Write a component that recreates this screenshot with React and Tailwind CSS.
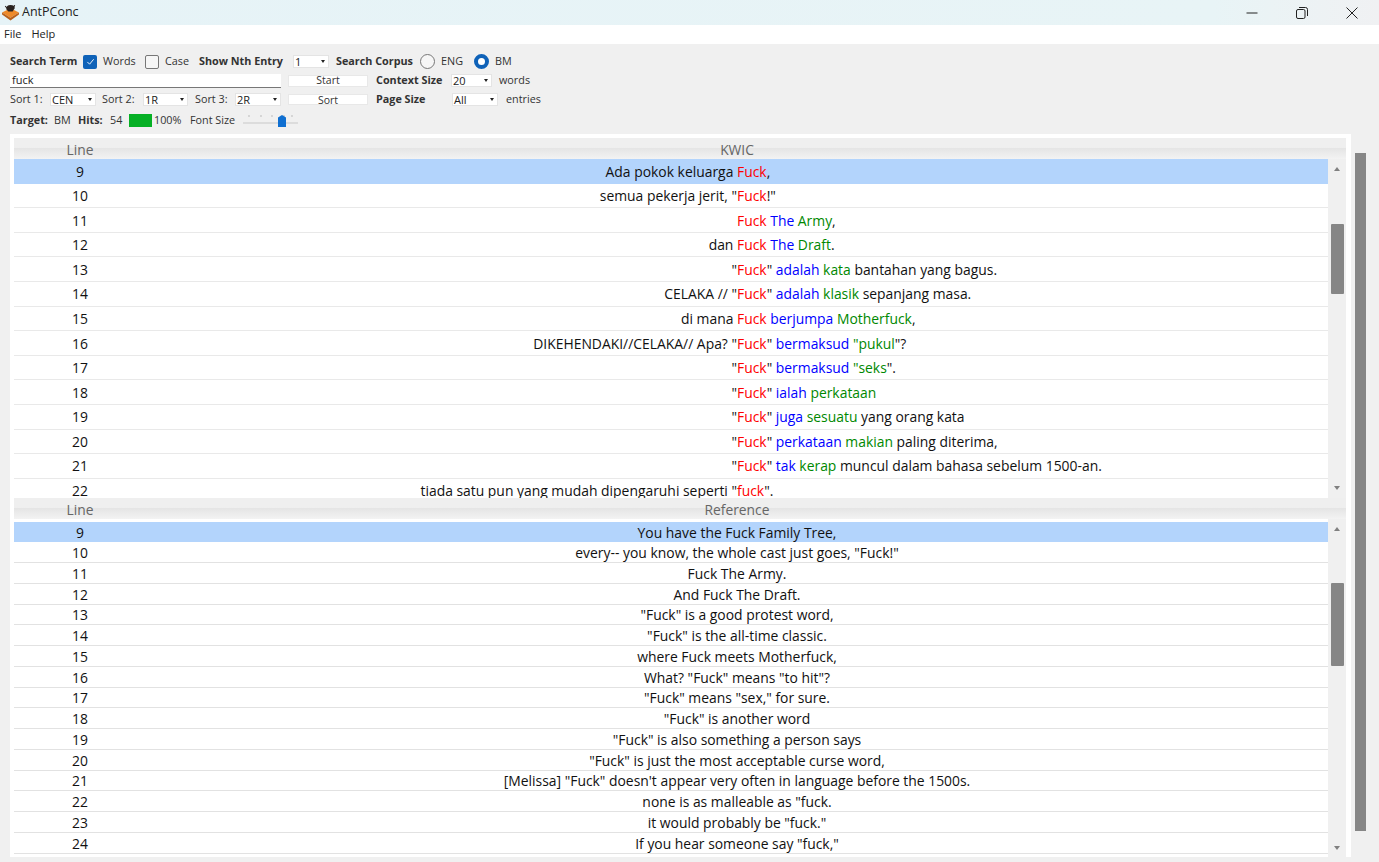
const kwicRows = [
  { n: 9, left: 'Ada pokok keluarga ', key: 'Fuck', r1: '', r2: '', rest: ',' },
  { n: 10, left: 'semua pekerja jerit, "', key: 'Fuck', r1: '', r2: '', rest: '!"' },
  { n: 11, left: '', key: 'Fuck', r1: ' The', r2: ' Army', rest: ',' },
  { n: 12, left: 'dan ', key: 'Fuck', r1: ' The', r2: ' Draft', rest: '.' },
  { n: 13, left: '"', key: 'Fuck', pre: '" ', r1: 'adalah', r2: ' kata', rest: ' bantahan yang bagus.' },
  { n: 14, left: 'CELAKA // "', key: 'Fuck', pre: '" ', r1: 'adalah', r2: ' klasik', rest: ' sepanjang masa.' },
  { n: 15, left: 'di mana ', key: 'Fuck', r1: ' berjumpa', r2: ' Motherfuck', rest: ',' },
  { n: 16, left: 'DIKEHENDAKI//CELAKA// Apa? "', key: 'Fuck', pre: '" ', r1: 'bermaksud', r2: ' "pukul', rest: '"?' },
  { n: 17, left: '"', key: 'Fuck', pre: '" ', r1: 'bermaksud', r2: ' "seks', rest: '".' },
  { n: 18, left: '"', key: 'Fuck', pre: '" ', r1: 'ialah', r2: ' perkataan', rest: '' },
  { n: 19, left: '"', key: 'Fuck', pre: '" ', r1: 'juga', r2: ' sesuatu', rest: ' yang orang kata' },
  { n: 20, left: '"', key: 'Fuck', pre: '" ', r1: 'perkataan', r2: ' makian', rest: ' paling diterima,' },
  { n: 21, left: '"', key: 'Fuck', pre: '" ', r1: 'tak', r2: ' kerap', rest: ' muncul dalam bahasa sebelum 1500-an.' },
  { n: 22, left: 'tiada satu pun yang mudah dipengaruhi seperti "', key: 'fuck', r1: '', r2: '', rest: '".' },
]

const refRows = [
  [9, 'You have the Fuck Family Tree,'],
  [10, 'every-- you know, the whole cast just goes, "Fuck!"'],
  [11, 'Fuck The Army.'],
  [12, 'And Fuck The Draft.'],
  [13, '"Fuck" is a good protest word,'],
  [14, '"Fuck" is the all-time classic.'],
  [15, 'where Fuck meets Motherfuck,'],
  [16, 'What? "Fuck" means "to hit"?'],
  [17, '"Fuck" means "sex," for sure.'],
  [18, '"Fuck" is another word'],
  [19, '"Fuck" is also something a person says'],
  [20, '"Fuck" is just the most acceptable curse word,'],
  [21, '[Melissa] "Fuck" doesn\'t appear very often in language before the 1500s.'],
  [22, 'none is as malleable as "fuck.'],
  [23, 'it would probably be "fuck."'],
  [24, 'If you hear someone say "fuck,"'],
]

function Logo() {
  return (
    <svg width="19" height="19" viewBox="0 0 18 18" className="ml-[1px] shrink-0">
      <path d="M1 9 L9 5 L17 9 L9 14 Z" fill="#ee8a2a" />
      <path d="M1 9 L9 14 L17 9 L17 11 L9 16.5 L1 11 Z" fill="#b9601a" />
      <path d="M5 6 Q5 2 9 2 Q13 2 13 5 L11 8 L7 8 Z" fill="#2a2320" />
      <path d="M4 3 L6 5 M13 2 L12 4" stroke="#2a2320" strokeWidth="1" />
    </svg>
  )
}

function Select({ value, className }) {
  return (
    <div className={`flex h-[13px] shrink-0 items-center justify-between bg-white pl-[2px] pr-[4px] text-[11px] leading-none text-[#222] shadow-[inset_0_0_0_1px_#e4e4e4] ${className}`}>
      <span>{value}</span>
      <span className="h-0 w-0 border-x-[2.5px] border-t-[3px] border-x-transparent border-t-[#222]" />
    </div>
  )
}

function Checkbox({ checked, className }) {
  if (checked) {
    return (
      <span className={`flex h-[14px] w-[14px] shrink-0 items-center justify-center rounded-[2px] bg-[#0f62b8] ${className}`}>
        <svg width="9" height="9" viewBox="0 0 10 10" fill="none" stroke="#fff" strokeWidth="1">
          <path d="M1.5 5.5 L4 8 L8.5 2.5" />
        </svg>
      </span>
    )
  }
  return <span className={`h-[14px] w-[14px] shrink-0 rounded-[2px] border border-[#777] bg-[#f6f6f6] ${className}`} />
}

function Label({ children, className }) {
  return <span className={`shrink-0 whitespace-nowrap ${className}`}>{children}</span>
}

function Bold({ children, className }) {
  return <span className={`shrink-0 whitespace-nowrap font-bold ${className}`}>{children}</span>
}

function Toolbar() {
  return (
    <div className="h-[90px] shrink-0 pl-[10px] text-[10.8px] text-[#333]">
      <div className="box-content flex h-[19px] items-center pt-[8px]">
        <Bold className="w-[73px]">Search Term</Bold>
        <Checkbox checked />
        <Label className="ml-[6px] w-[42px]">Words</Label>
        <Checkbox />
        <Label className="ml-[6px] w-[34px]">Case</Label>
        <Bold className="w-[94px]">Show Nth Entry</Bold>
        <Select value="1" className="w-[36px]" />
        <Bold className="ml-[7px] w-[84px]">Search Corpus</Bold>
        <span className="h-[15px] w-[15px] shrink-0 rounded-full border border-[#777] bg-[#f6f6f6]" />
        <Label className="ml-[6px] w-[33px]">ENG</Label>
        <span className="h-[15px] w-[15px] shrink-0 rounded-full border-[4.5px] border-[#0f62b8] bg-white" />
        <Label className="ml-[6px]">BM</Label>
      </div>
      <div className="flex h-[19px] items-center">
        <div className="flex h-[14px] w-[271px] shrink-0 items-center border-b border-[#777] bg-white pl-[2px] text-[11px] text-[#222]">fuck</div>
        <div className="ml-[7px] flex h-[12px] w-[80px] shrink-0 items-center justify-center bg-white text-[10.5px] leading-none shadow-[inset_0_0_0_1px_#e8e8e8]">Start</div>
        <Bold className="ml-[8px] w-[75px]">Context Size</Bold>
        <Select value="20" className="w-[41px]" />
        <Label className="ml-[7px]">words</Label>
      </div>
      <div className="flex h-[19px] items-center">
        <Label className="w-[40px]">Sort 1:</Label>
        <Select value="CEN" className="w-[46px]" />
        <Label className="ml-[6px] w-[41px]">Sort 2:</Label>
        <Select value="1R" className="w-[45px]" />
        <Label className="ml-[7px] w-[40px]">Sort 3:</Label>
        <Select value="2R" className="w-[46px]" />
        <div className="ml-[7px] flex h-[11px] w-[80px] shrink-0 items-start justify-center overflow-hidden bg-white text-[10.5px] leading-[13px] shadow-[inset_0_0_0_1px_#e8e8e8]">Sort</div>
        <Bold className="ml-[8px] w-[76px]">Page Size</Bold>
        <Select value="All" className="w-[46px]" />
        <Label className="ml-[8px]">entries</Label>
      </div>
      <div className="mt-[1px] flex h-[21px] items-center">
        <Bold className="w-[44px]">Target:</Bold>
        <Label className="w-[24px]">BM</Label>
        <Bold className="w-[32px]">Hits:</Bold>
        <Label className="w-[19px]">54</Label>
        <span className="h-[13px] w-[23px] shrink-0 bg-[#06b025]" />
        <Label className="ml-[2px] w-[36px]">100%</Label>
        <Label className="w-[53px]">Font Size</Label>
        <svg width="56" height="16" viewBox="0 0 56 16" className="shrink-0">
          <path d="M6 2v2M18 2v2M29 2v2M41 2v2M49 2v2" stroke="#bbb" />
          <rect x="0" y="9" width="55" height="2" fill="#dcdcdc" />
          <path d="M35 4.5 L39 2 L43 4.5 V14 H35 Z" fill="#0f6fd1" />
        </svg>
      </div>
    </div>
  )
}

function Header({ title }) {
  return (
    <div className="flex h-[21px] shrink-0 items-center bg-[linear-gradient(#efefef_0%,#efefef_45%,#e5e5e5_50%,#f3f3f3_100%)] pt-[3px] text-[13.8px] leading-none text-[#666]">
      <span className="w-[132px] text-center">Line</span>
      <span className="w-[1182px] text-center">{title}</span>
      <span className="w-[18px]" />
    </div>
  )
}

function Arrow({ up, className }) {
  return up
    ? <span className={`mx-auto block h-0 w-0 border-x-[3.5px] border-b-[4px] border-x-transparent border-b-[#808080] ${className}`} />
    : <span className={`mx-auto block h-0 w-0 border-x-[3.5px] border-t-[4px] border-x-transparent border-t-[#808080] ${className}`} />
}

function InnerScrollbar({ upTop, thumbTop, thumbH, downTop }) {
  return (
    <div className="w-[18px] shrink-0 bg-[#f0f0f0]">
      <Arrow up className={upTop} />
      <div className={`ml-[3px] w-[12.5px] rounded-[1px] bg-[#868686] ${thumbTop} ${thumbH}`} />
      <Arrow className={downTop} />
    </div>
  )
}

function KwicRow({ row, selected }) {
  return (
    <div className={`flex h-[24.6px] items-center whitespace-pre pt-[1px] text-[13.9px] leading-none text-[#111] ${selected ? 'bg-[#b3d4fc]' : 'border-b border-[#e9e9e9]'}`}>
      <span className="w-[132px] shrink-0 text-center">{row.n}</span>
      <span className="w-[591px] shrink-0 text-right">{row.left}</span>
      <span>
        <span className="text-[#f00]">{row.key}</span>
        {row.pre}
        <span className="text-[#00f]">{row.r1}</span>
        <span className="text-[#080]">{row.r2}</span>
        {row.rest}
      </span>
    </div>
  )
}

function RefRow({ n, text, selected }) {
  return (
    <div className={`flex h-[20.75px] items-center whitespace-pre pt-[2px] text-[13.9px] leading-none text-[#111] ${selected ? 'bg-[#b3d4fc]' : 'border-b border-[#e2e2e2]'}`}>
      <span className="w-[132px] shrink-0 text-center">{n}</span>
      <span className="w-[1182px] text-center">{text}</span>
    </div>
  )
}

export default function App() {
  return (
    <div className="flex h-[862px] w-full flex-col overflow-hidden bg-[#f0f0f0] font-['Open_Sans','Noto_Sans',sans-serif]">
      <div className="flex h-[25px] shrink-0 items-center bg-[linear-gradient(90deg,#e6f3f7_0%,#e8f4f6_88%,#f0f1f3_100%)]">
        <Logo />
        <span className="ml-[2px] text-[12.5px] text-[#222]">AntPConc</span>
        <div className="ml-auto flex items-center text-[#222]">
          <svg width="12" height="12" viewBox="0 0 12 12" className="mr-[38px]"><path d="M0.5 6h11" stroke="#222" /></svg>
          <svg width="12" height="12" viewBox="0 0 12 12" fill="none" stroke="#222" className="mr-[38px]">
            <rect x="0.5" y="2.5" width="8.5" height="9" rx="1.5" />
            <path d="M3 0.5h6.5a2 2 0 0 1 2 2V9" />
          </svg>
          <svg width="12" height="12" viewBox="0 0 12 12" stroke="#222" className="mr-[21px]"><path d="M0.5 0.5l11 11M11.5 0.5l-11 11" /></svg>
        </div>
      </div>
      <div className="flex h-[19px] shrink-0 items-center gap-[10px] bg-white pl-[4px] text-[11px] text-[#222]">
        <span>File</span>
        <span>Help</span>
      </div>
      <Toolbar />
      <div className="flex">
        <div className="ml-[10px] h-[723px] w-[1341px] shrink-0 bg-white pl-[4px] pt-[4px]">
          <div className="w-[1332px]">
            <Header title="KWIC" />
            <div className="flex h-[339px]">
              <div className="w-[1314px] shrink-0 overflow-hidden">
                {kwicRows.map((row, i) => <KwicRow key={row.n} row={row} selected={i === 0} />)}
              </div>
              <InnerScrollbar upTop="mt-[8px]" thumbTop="mt-[53px]" thumbH="h-[70px]" downTop="mt-[192px]" />
            </div>
            <Header title="Reference" />
            <div className="flex h-[338px]">
              <div className="w-[1314px] shrink-0 overflow-hidden pt-[2.5px]">
                {refRows.map(([n, text], i) => <RefRow key={n} n={n} text={text} selected={i === 0} />)}
              </div>
              <InnerScrollbar upTop="mt-[8px]" thumbTop="mt-[52px]" thumbH="h-[82.5px]" downTop="mt-[180px]" />
            </div>
          </div>
        </div>
        <div className="ml-[4px] mt-[19px] h-[678px] w-[10.5px] bg-[#868686]" />
      </div>
    </div>
  )
}
